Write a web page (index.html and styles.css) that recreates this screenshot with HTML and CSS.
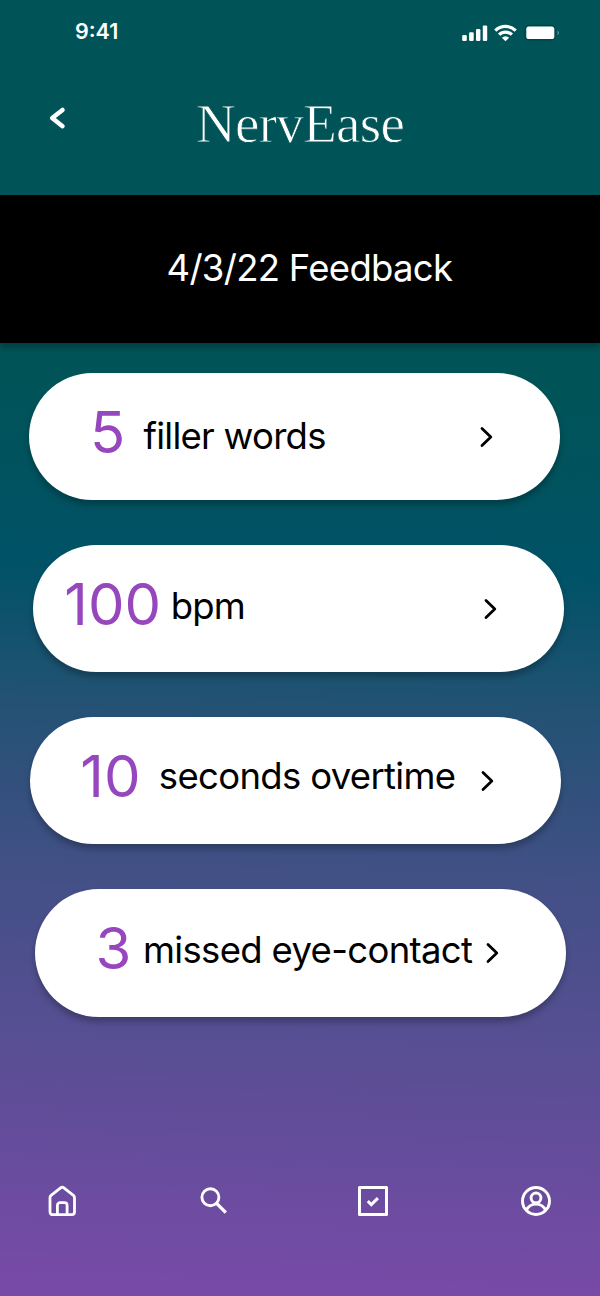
FILE: index.html
```html
<!DOCTYPE html>
<html lang="en">
<head>
<meta charset="utf-8">
<title>NervEase</title>
<link rel="stylesheet" href="styles.css">
</head>
<body>
<div class="screen">
  <div class="status">
    <span class="time">9:41</span>
    <svg class="signals" width="100" height="20" viewBox="0 0 100 20" fill="#fff">
      <rect x="2.200" y="11" width="4.600" height="6" rx="1.200"/>
      <rect x="9.100" y="8.300" width="4.600" height="8.700" rx="1.200"/>
      <rect x="16" y="5" width="4.400" height="12" rx="1.200"/>
      <rect x="22.800" y="1.400" width="4.400" height="15.600" rx="1.200"/>
      <g fill="none" stroke="#fff" stroke-width="3.200">
        <path d="M35.300 6.600A14.500 14.500 0 0 1 55.700 6.600"/>
        <path d="M39.100 10.700A9 9 0 0 1 51.900 10.700"/>
      </g>
      <path d="M45.500 17.200l-3.600-3.500a5 5 0 0 1 7.200 0z"/>
      <rect x="65" y="1.300" width="30" height="14.600" rx="4" fill="none" stroke="#003f49" stroke-width="1"/>
      <rect x="66.300" y="2.600" width="28" height="12.400" rx="2.600"/>
      <path d="M97.600 6.600c1.600.8 1.600 3.800 0 4.600z" opacity=".45"/>
    </svg>
  </div>
  <header class="header">
    <svg class="back" width="20" height="26" viewBox="0 0 20 26" fill="none" stroke="#fff" stroke-width="4.500" stroke-linecap="round" stroke-linejoin="round"><path d="M15.500 4.900L5.200 13l10.300 8.200"/></svg>
    <h1 class="brand">NervEase</h1>
  </header>
  <h2 class="banner">4/3/22 Feedback</h2>
  <main class="cards">
    <section class="card card-filler">
      <span class="count">5</span><span class="label">filler words</span>
      <svg class="chevron" width="16" height="24" viewBox="0 0 16 24"><path d="M3 3.500L11.800 12L3 20.500"/></svg>
    </section>
    <section class="card card-bpm">
      <span class="count">100</span><span class="label">bpm</span>
      <svg class="chevron" width="16" height="24" viewBox="0 0 16 24"><path d="M3 3.500L11.800 12L3 20.500"/></svg>
    </section>
    <section class="card card-time">
      <span class="count">10</span><span class="label">seconds overtime</span>
      <svg class="chevron" width="16" height="24" viewBox="0 0 16 24"><path d="M3 3.500L11.800 12L3 20.500"/></svg>
    </section>
    <section class="card card-eyes">
      <span class="count">3</span><span class="label">missed eye-contact</span>
      <svg class="chevron" width="16" height="24" viewBox="0 0 16 24"><path d="M3 3.500L11.800 12L3 20.500"/></svg>
    </section>
  </main>
  <nav class="nav">
    <svg width="30" height="32" viewBox="0 0 30 32" fill="none" stroke="#fff" stroke-width="2.800" stroke-linejoin="round">
      <path d="M3 12.800c0-1 .4-1.800 1.100-2.400L13.600 2.900a2.600 2.600 0 0 1 3.300 0l9.500 7.500c.7.600 1.100 1.400 1.100 2.400V27a2.700 2.700 0 0 1-2.700 2.700H5.700A2.700 2.700 0 0 1 3 27z"/>
      <path d="M10.400 29.500V20.300a2.700 2.700 0 0 1 2.700-2.700h4.300a2.700 2.700 0 0 1 2.700 2.700v9.200"/>
    </svg>
    <svg width="28" height="32" viewBox="0 0 28 32" fill="none" stroke="#fff" stroke-width="2.900">
      <circle cx="10.400" cy="12.200" r="8.500"/>
      <path d="M16.600 18.400L25.800 27.600" stroke-width="3.400"/>
    </svg>
    <svg width="30" height="32" viewBox="0 0 30 32" fill="none" stroke="#fff" stroke-width="3">
      <rect x="1.500" y="2.500" width="27" height="27" stroke-linejoin="round"/>
      <path d="M9.800 16.200l3.500 3.400 6.600-6.500"/>
    </svg>
    <svg width="30" height="32" viewBox="0 0 30 32" fill="none" stroke="#fff" stroke-width="2.900">
      <circle cx="15" cy="16" r="13.500"/>
      <circle cx="15" cy="12.900" r="4.900"/>
      <path d="M5.400 25.200a10.600 10.600 0 0 1 19.200 0"/>
    </svg>
  </nav>
</div>
</body>
</html>
```
FILE: styles.css
```css
* { box-sizing: border-box; }
body { margin: 0; }
.screen {
  width: 600px;
  height: 1296px;
  overflow: hidden;
  display: flex;
  flex-direction: column;
  font-family: Inter, "Liberation Sans", sans-serif;
  background: linear-gradient(181.5deg, #005457 0%, #005457 30%, #005267 44%, #1f5272 53%, #3f5084 66%, #544f91 78%, #794aa8 100%);
}
.status {
  height: 64px;
  flex: none;
  display: flex;
  justify-content: space-between;
  align-items: flex-start;
  padding: 18px 40px 0 75px;
}
.time {
  color: #fff;
  font-size: 21.500px;
  line-height: 27px;
  font-weight: 600;
}
.signals { margin-top: 6px; }
.header {
  height: 131px;
  flex: none;
  display: flex;
  align-items: flex-start;
  padding: 28px 0 0 47px;
}
.back { margin-top: 13px; }
.brand {
  margin: 0 0 0 129px;
  color: #fff;
  font-family: "Liberation Serif", serif;
  font-size: 55px;
  line-height: 63px;
  font-weight: 400;
  letter-spacing: -.7px;
  white-space: nowrap;
  -webkit-text-stroke: .8px #005457;
}
.banner {
  margin: 0;
  height: 148px;
  flex: none;
  padding-left: 166.500px;
  color: #fff;
  background: #000;
  font-size: 36.500px;
  line-height: 146px;
  font-weight: 400;
  letter-spacing: -.7px;
  white-space: nowrap;
  box-shadow: 0 5px 6px rgba(0, 0, 0, .25);
}
.cards {
  flex: none;
  display: grid;
  row-gap: 44.800px;
  padding-top: 30px;
}
.card {
  width: 531px;
  height: 127.300px;
  display: flex;
  align-items: flex-start;
  border-radius: 64px;
  background: #fff;
  box-shadow: 0 5px 6px rgba(0, 0, 0, .25);
}
.count {
  flex: none;
  color: #9747bd;
  font-size: 58px;
  line-height: 70px;
  padding-top: 24px;
}
.label {
  flex: 1;
  color: #000;
  font-size: 36.500px;
  line-height: 44px;
  letter-spacing: -.67px;
  padding-top: 41px;
  white-space: nowrap;
}
.chevron {
  flex: none;
  margin-top: 52px;
  margin-right: 65px;
  fill: none;
  stroke: #000;
  stroke-width: 2.800;
  stroke-linecap: round;
  stroke-linejoin: round;
}
.card-filler { margin-left: 29px; padding-left: 61px; }
.card-filler .count { width: 53.500px; }
.card-filler .label { letter-spacing: -.75px; }
.card-bpm { margin-left: 33.300px; padding-left: 31px; }
.card-bpm .count { width: 106.500px; }
.card-bpm .label { padding-top: 39px; letter-spacing: -.9px; }
.card-time { margin-left: 30.300px; padding-left: 50px; }
.card-time .count { width: 78.500px; }
.card-time .label { padding-top: 37px; }
.card-eyes { margin-left: 35px; padding-left: 60.500px; }
.card-eyes .count { width: 47.500px; }
.card-eyes .label { padding-top: 39px; }
.nav {
  display: grid;
  grid-template-columns: 153px 158px 163px 30px;
  padding: 168px 0 0 47px;
}
```
